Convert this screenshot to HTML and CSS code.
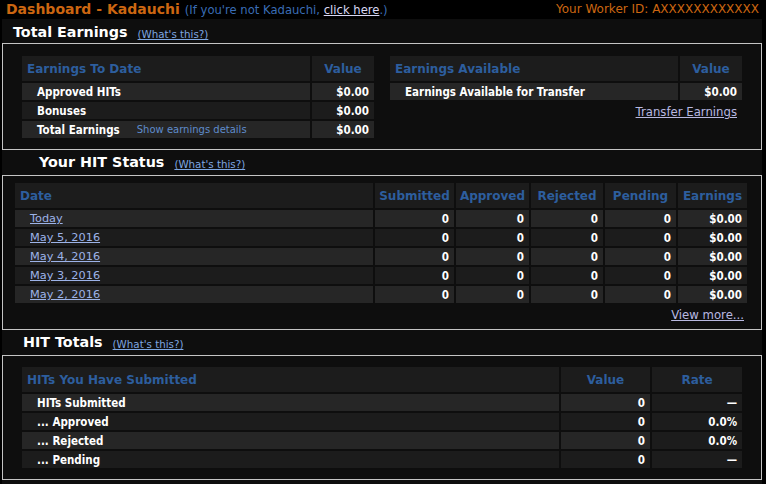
FILE: index.html
```html
<!DOCTYPE html>
<html>
<head>
<meta charset="utf-8">
<title>Dashboard</title>
<link rel="stylesheet" href="styles.css">
</head>
<body>
<div class="topbar">
  <div class="title">
    <span class="title-main">Dashboard - Kadauchi</span>
    <span class="title-note">(If you're not Kadauchi, <a class="title-link" href="#">click here</a>.)</span>
  </div>
  <div class="worker-id">Your Worker ID: AXXXXXXXXXXXX</div>
</div>

<div class="panel">
  <div class="section-head head-earnings">
    <span class="section-title">Total Earnings</span>
    <a class="whats" href="#">(What's this?)</a>
  </div>
  <div class="box box-earnings">
    <div class="grid grid-2">
      <div class="th th-left">Earnings To Date</div>
      <div class="th">Value</div>
      <div class="td td-label odd">Approved HITs</div>
      <div class="td td-num odd">$0.00</div>
      <div class="td td-label even">Bonuses</div>
      <div class="td td-num even">$0.00</div>
      <div class="td td-label odd">Total Earnings <a class="details" href="#">Show earnings details</a></div>
      <div class="td td-num odd">$0.00</div>
    </div>
    <div class="avail">
      <div class="grid grid-2">
        <div class="th th-left">Earnings Available</div>
        <div class="th">Value</div>
        <div class="td td-label odd">Earnings Available for Transfer</div>
        <div class="td td-num odd">$0.00</div>
      </div>
      <div class="transfer"><a class="plain-link" href="#">Transfer Earnings</a></div>
    </div>
  </div>

  <div class="section-head head-status">
    <span class="section-title">Your HIT Status</span>
    <a class="whats" href="#">(What's this?)</a>
  </div>
  <div class="box box-status">
    <div class="grid grid-status">
      <div class="th th-left">Date</div>
      <div class="th">Submitted</div>
      <div class="th">Approved</div>
      <div class="th">Rejected</div>
      <div class="th">Pending</div>
      <div class="th">Earnings</div>

      <div class="td td-label odd"><a class="date-link" href="#">Today</a></div>
      <div class="td td-num odd">0</div><div class="td td-num odd">0</div><div class="td td-num odd">0</div><div class="td td-num odd">0</div><div class="td td-num odd">$0.00</div>

      <div class="td td-label even"><a class="date-link" href="#">May 5, 2016</a></div>
      <div class="td td-num even">0</div><div class="td td-num even">0</div><div class="td td-num even">0</div><div class="td td-num even">0</div><div class="td td-num even">$0.00</div>

      <div class="td td-label odd"><a class="date-link" href="#">May 4, 2016</a></div>
      <div class="td td-num odd">0</div><div class="td td-num odd">0</div><div class="td td-num odd">0</div><div class="td td-num odd">0</div><div class="td td-num odd">$0.00</div>

      <div class="td td-label even"><a class="date-link" href="#">May 3, 2016</a></div>
      <div class="td td-num even">0</div><div class="td td-num even">0</div><div class="td td-num even">0</div><div class="td td-num even">0</div><div class="td td-num even">$0.00</div>

      <div class="td td-label odd"><a class="date-link" href="#">May 2, 2016</a></div>
      <div class="td td-num odd">0</div><div class="td td-num odd">0</div><div class="td td-num odd">0</div><div class="td td-num odd">0</div><div class="td td-num odd">$0.00</div>
    </div>
    <div class="view-more"><a class="plain-link" href="#">View more...</a></div>
  </div>

  <div class="section-head head-totals">
    <span class="section-title">HIT Totals</span>
    <a class="whats" href="#">(What's this?)</a>
  </div>
  <div class="box box-totals">
    <div class="grid grid-totals">
      <div class="th th-left">HITs You Have Submitted</div>
      <div class="th">Value</div>
      <div class="th">Rate</div>

      <div class="td td-label odd">HITs Submitted</div>
      <div class="td td-num odd">0</div>
      <div class="td td-num even">—</div>

      <div class="td td-label even">... Approved</div>
      <div class="td td-num even">0</div>
      <div class="td td-num even">0.0%</div>

      <div class="td td-label odd">... Rejected</div>
      <div class="td td-num odd">0</div>
      <div class="td td-num even">0.0%</div>

      <div class="td td-label even">... Pending</div>
      <div class="td td-num even">0</div>
      <div class="td td-num even">—</div>
    </div>
  </div>
</div>
</body>
</html>
```

FILE: styles.css
```css
html, body {
  margin: 0;
  padding: 0;
  background: #000;
  font-family: "DejaVu Sans", Verdana, sans-serif;
  color: #fff;
}

a { color: inherit; }

.topbar {
  height: 19px;
  display: flex;
  justify-content: space-between;
  align-items: flex-start;
  padding: 0 7px 0 6px;
  box-sizing: border-box;
}

.title { line-height: 17px; white-space: nowrap; }

.title-main {
  color: #cc6611;
  font-weight: bold;
  font-size: 14px;
}

.title-note {
  color: #3a6db5;
  font-size: 11.6px;
}

.title-link {
  color: #d8d8f4;
  text-decoration: underline;
}

.worker-id {
  color: #cc6611;
  font-size: 12px;
  line-height: 16px;
  padding-top: 1px;
  white-space: nowrap;
}

.panel {
  margin-left: 2px;
  width: 760px;
  background: #0e0e0e;
  min-height: 465px;
}

.section-head {
  height: 24px;
  display: flex;
  align-items: flex-end;
  padding-bottom: 3px;
  box-sizing: border-box;
  white-space: nowrap;
}

.head-earnings { padding-left: 11px; padding-bottom: 2px; }
.head-status { padding-left: 37px; height: 25px; padding-bottom: 4px; }
.head-totals { padding-left: 21px; height: 25px; padding-bottom: 4px; }

.section-title {
  font-size: 14.3px;
  font-weight: bold;
  color: #fff;
  line-height: 17px;
}

.whats {
  font-size: 10.3px;
  color: #7ea6e0;
  margin-left: 10px;
  line-height: 14px;
}

.box {
  border: 1px solid #c4c4c4;
}

.box-earnings {
  height: 107px;
  box-sizing: border-box;
  padding: 12px 19px 0;
  display: grid;
  grid-template-columns: 352px 352px;
  column-gap: 16px;
  align-items: start;
}

.box-status {
  height: 155px;
  box-sizing: border-box;
  padding: 7px 14px 0 12px;
}

.box-totals {
  height: 125px;
  box-sizing: border-box;
  padding: 11px 19px 0;
}

.grid {
  display: grid;
  gap: 2px;
  grid-auto-rows: 17px;
}

.grid-2 { grid-template-columns: 1fr 62px; grid-template-rows: 25px; }
.grid-status { grid-template-columns: 1fr 79px 73px 72px 71px 69px; grid-template-rows: 25px; }
.grid-totals { grid-template-columns: 1fr 89px 90px; grid-template-rows: 25px; }

.th {
  background: #1c1c1c;
  color: #2d5e9e;
  font-weight: bold;
  font-size: 12px;
  display: flex;
  align-items: center;
  justify-content: center;
  white-space: nowrap;
}

.th-left {
  justify-content: flex-start;
  padding-left: 5px;
}

.td {
  font-family: "DejaVu Sans Condensed", "DejaVu Sans", sans-serif;
  font-size: 11.5px;
  font-weight: bold;
  color: #fff;
  display: flex;
  align-items: center;
  white-space: nowrap;
}

.odd { background: #262626; }
.even { background: #1c1c1c; }

.td-label { padding-left: 15px; }

.td-num {
  justify-content: flex-end;
  padding-right: 5px;
}

.details {
  font-family: "DejaVu Sans", sans-serif;
  font-weight: normal;
  font-size: 10px;
  color: #5f8ccc;
  text-decoration: none;
  margin-left: 17px;
}

.date-link {
  font-family: "DejaVu Sans", sans-serif;
  color: #9db3e8;
  font-weight: normal;
  font-size: 11.3px;
  text-decoration: underline;
}

.plain-link {
  color: #b8b8e0;
  font-size: 11.7px;
  text-decoration: underline;
}

.transfer {
  text-align: right;
  padding-right: 5px;
  padding-top: 3px;
  line-height: 15px;
}

.view-more {
  text-align: right;
  padding-right: 3px;
  padding-top: 3px;
  line-height: 15px;
}
```
